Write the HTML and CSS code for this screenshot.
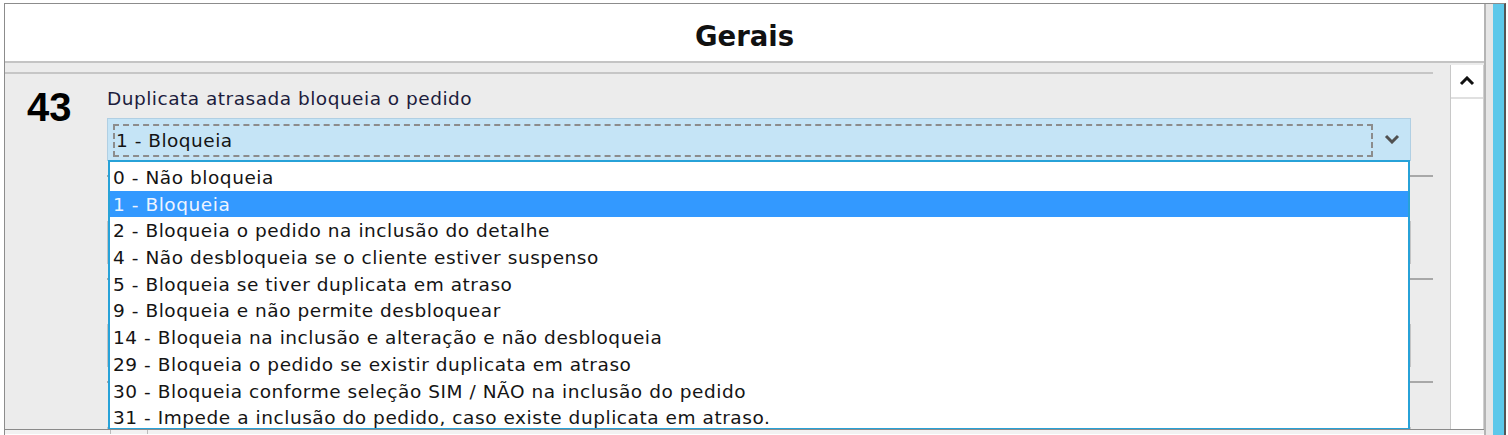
FILE: index.html
```html
<!DOCTYPE html>
<html lang="pt-BR">
<head>
	<meta charset="UTF-8">
	<title>Gerais</title>
	<link rel="stylesheet" href="styles.css">
</head>
<body>
	<div class="window">
		<div class="pane">
			<div class="title">Gerais</div>
			<div class="body">
				<div class="rows">
					<div class="row first">
						<div class="num">43</div>
						<div class="field">
							<div class="label">Duplicata atrasada bloqueia o pedido</div>
							<div class="combo">
								<div class="focus">1 - Bloqueia</div>
								<svg class="drop" width="16" height="10" viewBox="0 0 16 10"><polyline points="2,2 8,8 14,2" fill="none" stroke="#505050" stroke-width="3"/></svg>
							</div>
							<!-- lista aberta por cima das outras linhas -->
							<ul class="list">
								<li>0 - Não bloqueia</li>
								<li class="sel">1 - Bloqueia</li>
								<li>2 - Bloqueia o pedido na inclusão do detalhe</li>
								<li>4 - Não desbloqueia se o cliente estiver suspenso</li>
								<li>5 - Bloqueia se tiver duplicata em atraso</li>
								<li>9 - Bloqueia e não permite desbloquear</li>
								<li>14 - Bloqueia na inclusão e alteração e não desbloqueia</li>
								<li>29 - Bloqueia o pedido se existir duplicata em atraso</li>
								<li>30 - Bloqueia conforme seleção SIM / NÃO na inclusão do pedido</li>
								<li>31 - Impede a inclusão do pedido, caso existe duplicata em atraso.</li>
							</ul>
						</div>
					</div>
					<div class="row ghost"><div class="field"><div class="combo"></div></div></div>
					<div class="row ghost"><div class="field"><div class="combo"></div></div></div>
					<div class="row ghost"><div class="field"><div class="combo"></div></div></div>
				</div>
				<div class="vscroll">
					<div class="up">
						<svg width="16" height="10" viewBox="0 0 16 10"><polyline points="2,8 8,2 14,8" fill="none" stroke="#111" stroke-width="3"/></svg>
					</div>
				</div>
			</div>
			<div class="hbar"><span></span></div>
		</div>
		<div class="gutter"></div>
		<div class="edge"></div>
	</div>
</body>
</html>
```

FILE: styles.css
```css
*{
	margin:0;
	padding:0;
	box-sizing:border-box;
}
body{
	background:#fff;
	padding:3px 0 0 4px;
	font-family:"DejaVu Sans",sans-serif;
	color:#141414;
	overflow:hidden;
}
.window{
	display:flex;
	width:1502px;
	height:432px;
	border-top:1px solid #8c8c8c;
	border-left:1px solid #8c8c8c;
	border-right:2px solid #555;
}
.pane{
	flex:1;
	display:flex;
	flex-direction:column;
	border-right:2px solid #b4b4b4;
}
.title{
	height:59px;
	background:#fff;
	border-bottom:2px solid #c4c4c4;
	text-align:center;
	font-family:"DejaVu Sans",sans-serif;
	font-weight:bold;
	font-size:27.5px;
	line-height:64px;
	color:#111;
}
.body{
	display:flex;
	height:367px;
	background:#ececec;
	border-bottom:1px solid #8a8a8a;
	overflow:hidden;
}
.rows{
	width:1428px;
	margin-top:9px;
	margin-right:17px;
}
.row{
	display:flex;
	height:103px;
	border-top:2px solid #c6c6c6;
}
.row.ghost{
	margin-left:102px;
	border-top-color:#a8a8a8;
}
.num{
	width:102px;
	padding:11px 0 0 22px;
	font-family:"Liberation Sans",Arial,sans-serif;
	font-weight:bold;
	font-size:40px;
	color:#000;
}
.field{
	position:relative;
	width:1304px;
}
.label{
	margin-top:13px;
	height:23px;
	font-size:18.5px;
	letter-spacing:0.5px;
	line-height:23px;
	color:#1c1c3c;
}
.combo{
	display:flex;
	align-items:flex-start;
	margin-top:8px;
	height:43px;
	background:#c5e4f6;
	border:1px solid #b0cfe3;
}
.ghost .combo{
	margin-top:44px;
	background:#ececec;
	border-color:#c4c4c4;
}
.focus{
	flex:1;
	margin:5px 37px 0 5px;
	height:33px;
	border:2px dashed #8c8c8c;
	padding-left:1px;
	font-size:18.5px;
	letter-spacing:0.5px;
	line-height:29px;
}
.drop{
	position:absolute;
	right:11px;
	top:60px;
}
.list{
	position:absolute;
	left:1px;
	top:86px;
	width:1302px;
	height:270px;
	list-style:none;
	background:#fff;
	border:2px solid #27a2d8;
	padding-top:2px;
	z-index:2;
}
.list li{
	height:26.7px;
	line-height:28px;
	padding-left:3px;
	font-size:18.5px;
	letter-spacing:0.55px;
	white-space:nowrap;
}
.list li.sel{
	background:#3399ff;
	color:#eef4ff;
}
.vscroll{
	width:34px;
	margin-top:2px;
	background:#fff;
	border-left:1px solid #c8c8c8;
	border-right:1px solid #d0d0d0;
}
.up{
	display:flex;
	align-items:center;
	justify-content:center;
	height:34px;
	border-bottom:2px solid #e0e0e0;
}
.hbar{
	height:4px;
	background:#f2f2f2;
}
.hbar span{
	display:block;
	margin-left:105px;
	width:38px;
	height:4px;
	border-left:1px solid #bbb;
	border-right:1px solid #bbb;
}
.gutter{
	width:7px;
	background:#e6e6e6;
}
.edge{
	width:11px;
	background:#5dc8ea;
}
```
